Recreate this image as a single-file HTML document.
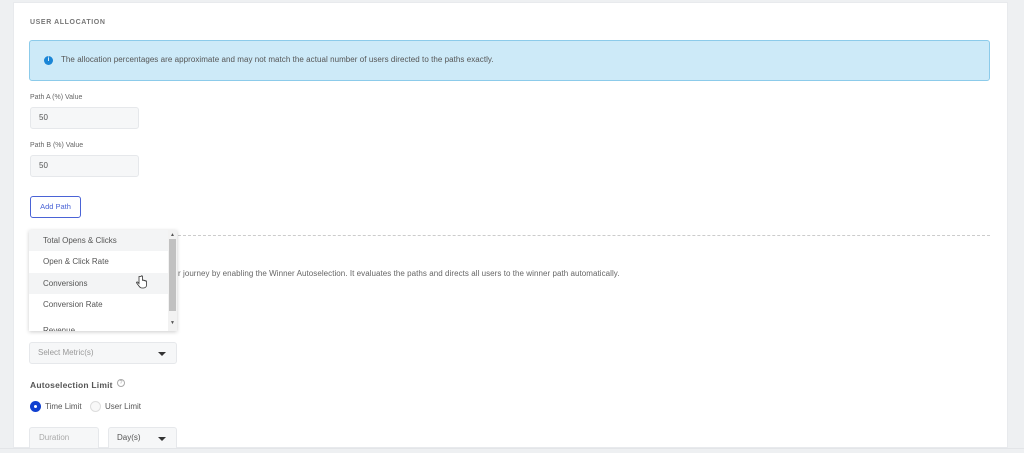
<!DOCTYPE html>
<html><head><meta charset="utf-8"><style>
*{box-sizing:border-box;margin:0;padding:0}
body{width:1024px;height:453px;background:#eef0f2;font-family:"Liberation Sans",sans-serif;position:relative;overflow:hidden;color:#555}
.panel{position:absolute;left:13px;top:2px;width:995px;height:446px;background:#fff;border:1px solid #e8eaed}
.a{position:absolute;white-space:nowrap}
.box{position:absolute;background:#f6f7f8;border:1px solid #e6e8eb;border-radius:3px}
.arr{position:absolute;width:0;height:0;border-left:4px solid transparent;border-right:4px solid transparent;border-top:4px solid #333}
</style></head><body>
<div class="panel"></div>
<div class="a" style="left:30px;top:19px;font-size:7px;font-weight:bold;letter-spacing:.6px;color:#777">USER ALLOCATION</div>
<div class="a" style="left:29px;top:40px;width:961px;height:41px;background:#cdeaf8;border:1px solid #8ccbea;border-radius:3px"></div>
<div class="a" style="left:44px;top:56px;width:9px;height:9px;border-radius:50%;background:#1b86d6;color:#fff;font-size:6px;font-weight:bold;text-align:center;line-height:9px">i</div>
<div class="a" style="left:61px;top:55px;font-size:8px;color:#555;letter-spacing:.05px">The allocation percentages are approximate and may not match the actual number of users directed to the paths exactly.</div>
<div class="a" style="left:30px;top:94px;font-size:7px;color:#666">Path A (%) Value</div>
<div class="box" style="left:30px;top:107px;width:109px;height:22px"></div>
<div class="a" style="left:39px;top:113px;font-size:8px;color:#555">50</div>
<div class="a" style="left:30px;top:142px;font-size:7px;color:#666">Path B (%) Value</div>
<div class="box" style="left:30px;top:155px;width:109px;height:22px"></div>
<div class="a" style="left:39px;top:161px;font-size:8px;color:#555">50</div>
<div class="a" style="left:30px;top:196px;width:51px;height:22px;border:1px solid #4a63d6;border-radius:3px;font-size:7.5px;color:#4a63d6;text-align:center;line-height:20px">Add Path</div>
<div class="a" style="left:178px;top:235px;width:812px;border-top:1px dashed #ccc"></div>
<div class="a" style="left:178px;top:269px;font-size:8px;color:#666;letter-spacing:.05px">r journey by enabling the Winner Autoselection. It evaluates the paths and directs all users to the winner path automatically.</div>
<!-- dropdown -->
<div class="a" style="left:29px;top:230px;width:148px;height:101px;background:#fff;box-shadow:0 1px 4px rgba(0,0,0,.2);overflow:hidden">
 <div style="height:21px;background:#f3f4f5;padding-left:14px;font-size:8px;line-height:21px;color:#555">Total Opens &amp; Clicks</div>
 <div style="height:22px;background:#fff;padding-left:14px;font-size:8px;line-height:22px;color:#555">Open &amp; Click Rate</div>
 <div style="height:21px;background:#f3f4f5;padding-left:14px;font-size:8px;line-height:21px;color:#555">Conversions</div>
 <div style="height:22px;background:#fff;padding-left:14px;font-size:8px;line-height:22px;color:#555">Conversion Rate</div>
 <div style="height:21px;background:#fff;padding-left:14px;font-size:8px;line-height:30px;color:#555">Revenue</div>
 <div style="position:absolute;right:0;top:0;width:9px;height:101px;background:#f2f2f2"></div>
 <div style="position:absolute;right:1px;top:9px;width:7px;height:72px;background:#c1c1c1"></div>
 <div style="position:absolute;right:2px;top:2px;font-size:5px;color:#555">▲</div>
 <div style="position:absolute;right:2px;top:90px;font-size:5px;color:#555">▼</div>
</div>
<svg class="a" style="left:136px;top:275px" width="12" height="14" viewBox="0 0 12 14"><path d="M3 1.5v7l-1.3-1.3c-.6-.6-1.5 0-1 .8l2.6 3.5c.6.8 1.4 1.5 2.7 1.5h1.5c1.8 0 3-1.3 3-3V6.5c0-.9-1.3-.9-1.3 0V6c0-.9-1.3-.9-1.3 0v-.3c0-.9-1.4-.9-1.4 0V1.5c0-.9-1.5-.9-1.5 0z" fill="#fff" stroke="#333" stroke-width=".8"/></svg>
<div class="box" style="left:29px;top:342px;width:148px;height:22px;background:#f6f7f8"></div>
<div class="a" style="left:38px;top:348px;font-size:8px;color:#999">Select Metric(s)</div>
<div class="arr" style="left:158px;top:352px"></div>
<div class="a" style="left:30px;top:380px;font-size:8.5px;font-weight:bold;color:#555;letter-spacing:.2px">Autoselection Limit</div>
<div class="a" style="left:117px;top:379px;width:8px;height:8px;border:1px solid #aaa;border-radius:50%;font-size:5px;color:#999;text-align:center;line-height:7px">?</div>
<div class="a" style="left:30px;top:401px;width:11px;height:11px;border-radius:50%;background:#1040d0"></div>
<div class="a" style="left:34px;top:405px;width:3px;height:3px;border-radius:50%;background:#fff"></div>
<div class="a" style="left:45px;top:402px;font-size:8px;color:#555">Time Limit</div>
<div class="a" style="left:90px;top:401px;width:11px;height:11px;border-radius:50%;border:1px solid #ddd;background:#f8f8f8"></div>
<div class="a" style="left:105px;top:402px;font-size:8px;color:#555">User Limit</div>
<div class="box" style="left:29px;top:427px;width:70px;height:26px"></div>
<div class="a" style="left:39px;top:433px;font-size:8px;color:#aaa">Duration</div>
<div class="box" style="left:108px;top:427px;width:69px;height:26px"></div>
<div class="a" style="left:117px;top:433px;font-size:8px;color:#555">Day(s)</div>
<div class="arr" style="left:158px;top:437px"></div>
<div class="a" style="left:0;top:448px;width:1024px;height:5px;background:#eef0f2;border-top:1px solid #e3e5e8"></div>
</body></html>
